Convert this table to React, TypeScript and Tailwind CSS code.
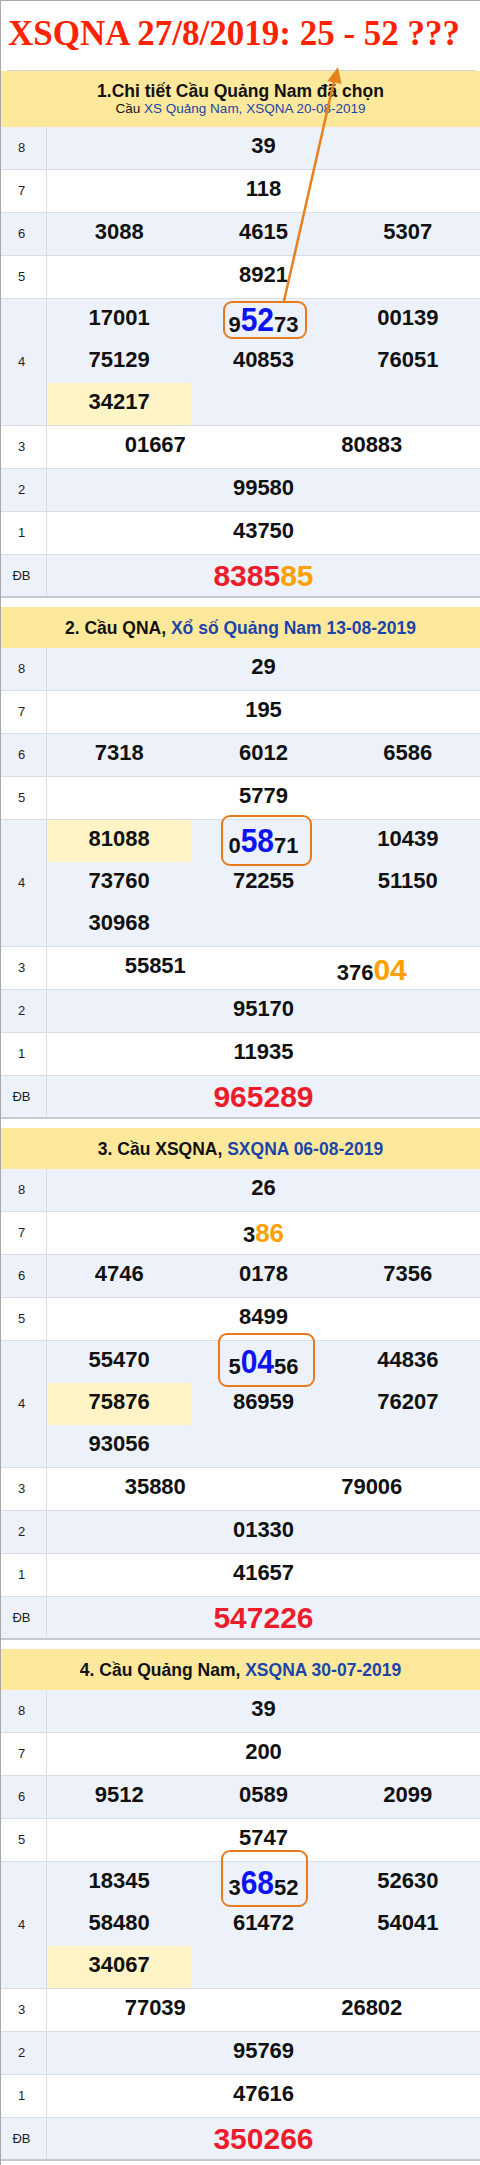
import React from 'react';

type Tone = 'blue' | 'orange' | 'orangeSm' | 'hot';
type Part = string | [string, Tone];
type Cell = { v: Part[]; hl?: boolean };

interface Section {
  title: string;
  link: string;
  sub?: boolean;
  g8: string;
  g7: Part[];
  g6: string[];
  g5: string;
  g4: Cell[][];
  box: string;
  g3: Part[][];
  g2: string;
  g1: string;
  db: Part[];
}

const sections: Section[] = [
  {
    title: '1.Chi tiết Cầu Quảng Nam đã chọn',
    link: 'XS Quảng Nam, XSQNA 20-08-2019',
    sub: true,
    g8: '39',
    g7: ['118'],
    g6: ['3088', '4615', '5307'],
    g5: '8921',
    g4: [
      [{ v: ['17001'] }, { v: ['9', ['52', 'blue'], '73'] }, { v: ['00139'] }],
      [{ v: ['75129'] }, { v: ['40853'] }, { v: ['76051'] }],
      [{ v: ['34217'], hl: true }],
    ],
    box: 'left-[32px] top-[2px] w-[84px] h-[38px]',
    g3: [['01667'], ['80883']],
    g2: '99580',
    g1: '43750',
    db: ['8385', ['85', 'hot']],
  },
  {
    title: '2. Cầu QNA, ',
    link: 'Xổ số Quảng Nam 13-08-2019',
    g8: '29',
    g7: ['195'],
    g6: ['7318', '6012', '6586'],
    g5: '5779',
    g4: [
      [{ v: ['81088'], hl: true }, { v: ['0', ['58', 'blue'], '71'] }, { v: ['10439'] }],
      [{ v: ['73760'] }, { v: ['72255'] }, { v: ['51150'] }],
      [{ v: ['30968'] }],
    ],
    box: 'left-[30px] top-[-5px] w-[91px] h-[51px]',
    g3: [['55851'], ['376', ['04', 'orange']]],
    g2: '95170',
    g1: '11935',
    db: ['965289'],
  },
  {
    title: '3. Cầu XSQNA, ',
    link: 'SXQNA 06-08-2019',
    g8: '26',
    g7: ['3', ['86', 'orangeSm']],
    g6: ['4746', '0178', '7356'],
    g5: '8499',
    g4: [
      [{ v: ['55470'] }, { v: ['5', ['04', 'blue'], '56'] }, { v: ['44836'] }],
      [{ v: ['75876'], hl: true }, { v: ['86959'] }, { v: ['76207'] }],
      [{ v: ['93056'] }],
    ],
    box: 'left-[27px] top-[-8px] w-[97px] h-[54px]',
    g3: [['35880'], ['79006']],
    g2: '01330',
    g1: '41657',
    db: ['547226'],
  },
  {
    title: '4. Cầu Quảng Nam, ',
    link: 'XSQNA 30-07-2019',
    g8: '39',
    g7: ['200'],
    g6: ['9512', '0589', '2099'],
    g5: '5747',
    g4: [
      [{ v: ['18345'] }, { v: ['3', ['68', 'blue'], '52'] }, { v: ['52630'] }],
      [{ v: ['58480'] }, { v: ['61472'] }, { v: ['54041'] }],
      [{ v: ['34067'], hl: true }],
    ],
    box: 'left-[30px] top-[-12px] w-[87px] h-[57px]',
    g3: [['77039'], ['26802']],
    g2: '95769',
    g1: '47616',
    db: ['350266'],
  },
];

const toneClass: Record<Tone, string> = {
  blue: 'inline-block origin-bottom scale-y-[1.12] text-[30px] leading-[34px] text-[#0b14f2]',
  orange: 'text-[30px] leading-[34px] text-[#ffa000]',
  orangeSm: 'text-[26px] leading-[30px] text-[#ffa000]',
  hot: 'text-[#ffa000]',
};

const Num = ({ parts }: { parts: Part[] }) => (
  <>
    {parts.map((p, i) =>
      typeof p === 'string' ? (
        <span key={i}>{p}</span>
      ) : (
        <span key={i} className={toneClass[p[1]]}>
          {p[0]}
        </span>
      )
    )}
  </>
);

const Label = ({ children }: { children: React.ReactNode }) => (
  <div className="w-[46px] shrink-0 border-r border-[#d9dde4] flex items-center justify-center pr-[4px] text-[13px] text-[#1e1e1e]">
    {children}
  </div>
);

// plain prize row: 1, 2 or 3 equal columns
const PrizeRow = ({ label, cells, blue }: { label: string; cells: Part[][]; blue?: boolean }) => (
  <div className={`flex h-[43px] border-b border-[#d9dde4] ${blue ? 'bg-[#edf1fa]' : 'bg-white'}`}>
    <Label>{label}</Label>
    <div className="flex flex-1">
      {cells.map((c, i) => (
        <div key={i} className="flex-1 text-center pt-[6px] text-[22px] leading-[25px] font-bold text-[#111]">
          <Num parts={c} />
        </div>
      ))}
    </div>
  </div>
);

const Table = ({ s }: { s: Section }) => (
  <div>
    {s.sub ? (
      <div className="h-[56px] bg-[#fde89c] text-center pt-[10px]">
        <div className="text-[17.5px] leading-[20px] font-bold text-[#111]">{s.title}</div>
        <div className="text-[13.5px] leading-[16px] text-[#111]">
          Cầu <span className="text-[#1c45a8]">{s.link}</span>
        </div>
      </div>
    ) : (
      <div className="h-[41px] bg-[#fde89c] flex items-center justify-center text-[17.5px] leading-[20px] font-bold text-[#111]">
        <span>
          {s.title}
          <span className="text-[#1c45a8]">{s.link}</span>
        </span>
      </div>
    )}

    <PrizeRow label="8" cells={[[s.g8]]} blue />
    <PrizeRow label="7" cells={[s.g7]} />
    <PrizeRow label="6" cells={s.g6.map((n) => [n])} blue />
    <PrizeRow label="5" cells={[[s.g5]]} />

    {/* giai 4: seven numbers on three lines */}
    <div className="flex h-[127px] border-b border-[#d9dde4] bg-[#edf1fa]">
      <Label>4</Label>
      <div className="flex flex-col flex-1">
        {s.g4.map((line, li) => (
          <div key={li} className={`flex ${li < 2 ? 'h-[42px]' : 'flex-1'}`}>
            {[0, 1, 2].map((ci) => {
              const c = line[ci];
              return (
                <div
                  key={ci}
                  className={`relative w-1/3 text-center pt-[6px] text-[22px] leading-[25px] font-bold text-[#111] ${
                    c?.hl ? 'bg-[#fff4c6]' : ''
                  }`}
                >
                  {c && <Num parts={c.v} />}
                  {li === 0 && ci === 1 && (
                    <div className={`absolute border-[2.5px] border-[#e8791c] rounded-[9px] ${s.box}`} />
                  )}
                </div>
              );
            })}
          </div>
        ))}
      </div>
    </div>

    <PrizeRow label="3" cells={s.g3} />
    <PrizeRow label="2" cells={[[s.g2]]} blue />
    <PrizeRow label="1" cells={[[s.g1]]} />

    <div className="flex h-[43px] border-b-2 border-[#c6c9cf] bg-[#edf1fa]">
      <Label>ĐB</Label>
      <div className="flex-1 text-center pt-[4px] text-[30px] leading-[34px] font-bold text-[#ec1c2a]">
        <Num parts={s.db} />
      </div>
    </div>
  </div>
);

export default function App() {
  return (
    <div className="relative w-[480px] min-h-[2165px] bg-white border-l border-t border-[#a8a8a8] font-['Liberation_Sans',Arial,sans-serif]">
      <div className="h-[69px] pl-[7px] pt-[15px]">
        <h1 className="font-['Liberation_Serif','Times_New_Roman',serif] text-[35px] leading-[36px] font-bold text-[#ff2200] whitespace-nowrap">
          XSQNA 27/8/2019: 25 - 52 ???
        </h1>
      </div>
      <div className="h-px ml-[6px] mr-[4px] bg-[#d2d2d2]" />

      <div className="flex flex-col gap-[9px]">
        {sections.map((s, i) => (
          <Table key={i} s={s} />
        ))}
      </div>

      {/* arrow from the first box up to the title */}
      <svg className="absolute left-0 top-0 w-[480px] h-[310px] pointer-events-none" viewBox="0 0 480 310">
        <line x1="283" y1="300" x2="333" y2="80" stroke="#e8801c" strokeWidth="2.5" />
        <polygon points="337,66 340.5,83 326.5,80" fill="#e8801c" />
      </svg>
    </div>
  );
}
